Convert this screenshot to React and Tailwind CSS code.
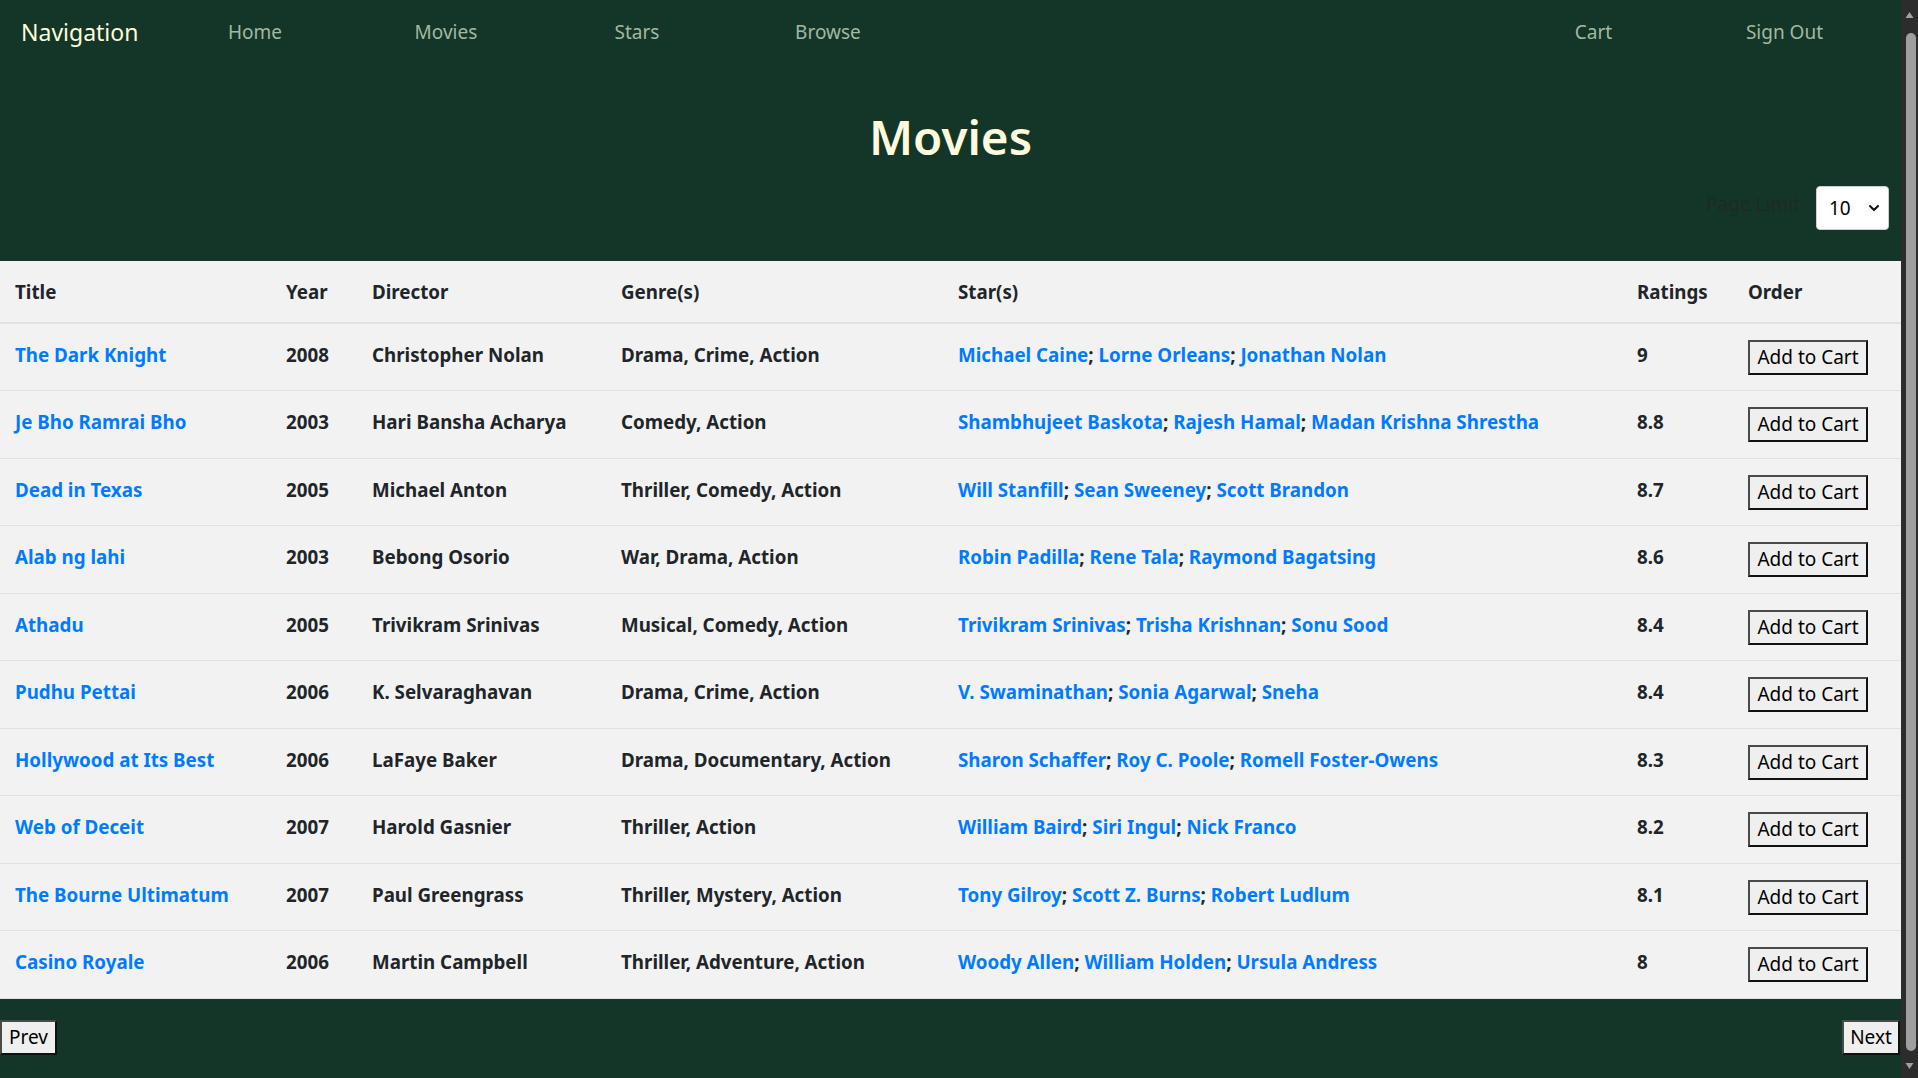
import React from "react";

const rows = [
  ["The Dark Knight", "2008", "Christopher Nolan", "Drama, Crime, Action", ["Michael Caine", "Lorne Orleans", "Jonathan Nolan"], "9"],
  ["Je Bho Ramrai Bho", "2003", "Hari Bansha Acharya", "Comedy, Action", ["Shambhujeet Baskota", "Rajesh Hamal", "Madan Krishna Shrestha"], "8.8"],
  ["Dead in Texas", "2005", "Michael Anton", "Thriller, Comedy, Action", ["Will Stanfill", "Sean Sweeney", "Scott Brandon"], "8.7"],
  ["Alab ng lahi", "2003", "Bebong Osorio", "War, Drama, Action", ["Robin Padilla", "Rene Tala", "Raymond Bagatsing"], "8.6"],
  ["Athadu", "2005", "Trivikram Srinivas", "Musical, Comedy, Action", ["Trivikram Srinivas", "Trisha Krishnan", "Sonu Sood"], "8.4"],
  ["Pudhu Pettai", "2006", "K. Selvaraghavan", "Drama, Crime, Action", ["V. Swaminathan", "Sonia Agarwal", "Sneha"], "8.4"],
  ["Hollywood at Its Best", "2006", "LaFaye Baker", "Drama, Documentary, Action", ["Sharon Schaffer", "Roy C. Poole", "Romell Foster-Owens"], "8.3"],
  ["Web of Deceit", "2007", "Harold Gasnier", "Thriller, Action", ["William Baird", "Siri Ingul", "Nick Franco"], "8.2"],
  ["The Bourne Ultimatum", "2007", "Paul Greengrass", "Thriller, Mystery, Action", ["Tony Gilroy", "Scott Z. Burns", "Robert Ludlum"], "8.1"],
  ["Casino Royale", "2006", "Martin Campbell", "Thriller, Adventure, Action", ["Woody Allen", "William Holden", "Ursula Andress"], "8"],
];

const navLinks = ["Home", "Movies", "Stars", "Browse"];

function Btn({ children, className = "" }) {
  return (
    <button
      className={
        "h-[35px] bg-[#efefef] border-2 border-t-[#4a4a4a] border-l-[#4a4a4a] border-b-[#111] border-r-[#111] text-black text-[19px] font-normal leading-none " +
        className
      }
    >
      {children}
    </button>
  );
}

const td = "px-[15px] pt-[16px] align-top text-[18.75px] font-bold leading-[30px] whitespace-nowrap";

export default function App() {
  return (
    <div
      className="flex h-screen w-full overflow-hidden bg-[#133629]"
      style={{ fontFamily: '"Noto Sans", "Open Sans", sans-serif' }}
    >
      <div className="flex flex-1 flex-col min-w-0">
        {/* Nav */}
        <nav className="flex h-[64px] shrink-0 items-center px-[21px]">
          <span className="mr-[21px] text-[23px] text-[#fffbdc] leading-none">Navigation</span>
          {navLinks.map((l) => (
            <a key={l} className="w-[191px] text-center text-[19px] text-[#a4b8a0]">
              {l}
            </a>
          ))}
          <div className="flex-1" />
          <a className="w-[191px] text-center text-[19px] text-[#a4b8a0]">Cart</a>
          <a className="w-[191px] text-center text-[19px] text-[#a4b8a0]">Sign Out</a>
        </nav>

        {/* Title */}
        <h1 className="mt-[43px] text-center text-[47.5px] font-semibold leading-[60px] text-[#fffadb]">
          Movies
        </h1>

        {/* Page limit */}
        <div className="mt-[19px] flex items-start justify-end gap-[16px] pr-[12px] pb-[31px]">
          <span className="mt-[3px] text-[19px] leading-[30px] text-[#1f2a25]">Page Limit</span>
          <div className="flex h-[44px] w-[73px] items-center justify-between rounded-[4px] border border-[#cfcfcf] bg-white pl-[12px] pr-[8px]">
            <span className="text-[19px] text-black">10</span>
            <svg width="12" height="12" viewBox="0 0 12 12" fill="none">
              <path d="M2 4l4 4 4-4" stroke="#111" strokeWidth="2" strokeLinecap="round" strokeLinejoin="round" />
            </svg>
          </div>
        </div>

        {/* Table */}
        <table className="w-full table-fixed border-collapse bg-[#f2f2f2] text-[#212529]">
          <colgroup>
            <col className="w-[271px]" />
            <col className="w-[86px]" />
            <col className="w-[249px]" />
            <col className="w-[337px]" />
            <col className="w-[679px]" />
            <col className="w-[111px]" />
            <col className="w-[168px]" />
          </colgroup>
          <thead>
            <tr className="h-[62px] border-b-2 border-[#dee2e6]">
              {["Title", "Year", "Director", "Genre(s)", "Star(s)", "Ratings", "Order"].map((h) => (
                <th key={h} className="px-[15px] pt-[2px] text-left align-middle text-[18.75px] font-bold">
                  {h}
                </th>
              ))}
            </tr>
          </thead>
          <tbody>
            {rows.map((r, i) => (
              <tr key={i} className="h-[67.5px] border-b border-[#dee2e6]">
                <td className={td + " text-[#007bff]"}>{r[0]}</td>
                <td className={td}>{r[1]}</td>
                <td className={td}>{r[2]}</td>
                <td className={td}>{r[3]}</td>
                <td className={td}>
                  {r[4].map((s, j) => (
                    <React.Fragment key={j}>
                      <span className="text-[#007bff]">{s}</span>
                      {j < r[4].length - 1 ? "; " : ""}
                    </React.Fragment>
                  ))}
                </td>
                <td className={td}>{r[5]}</td>
                <td className="px-[15px] pt-[16px] align-top">
                  <Btn className="w-[120px]">Add to Cart</Btn>
                </td>
              </tr>
            ))}
          </tbody>
        </table>

        {/* Footer */}
        <div className="flex flex-1 items-start justify-between pt-[21px] pr-[1px]">
          <Btn className="w-[57px]">Prev</Btn>
          <Btn className="w-[58px]">Next</Btn>
        </div>
      </div>

      {/* Scrollbar */}
      <div className="flex w-[17px] shrink-0 flex-col items-center bg-[#2c2c2c]">
        <svg className="mt-[11px]" width="9" height="8" viewBox="0 0 9 8">
          <path d="M4.5 1L8.5 7H0.5Z" fill="#a0a0a0" />
        </svg>
        <div className="mt-[14px] ml-[2px] w-[10px] flex-1 rounded-full bg-[#9f9f9f]" />
        <svg className="mt-[11px] mb-[8px]" width="9" height="8" viewBox="0 0 9 8">
          <path d="M0.5 1H8.5L4.5 7Z" fill="#a0a0a0" />
        </svg>
      </div>
    </div>
  );
}
